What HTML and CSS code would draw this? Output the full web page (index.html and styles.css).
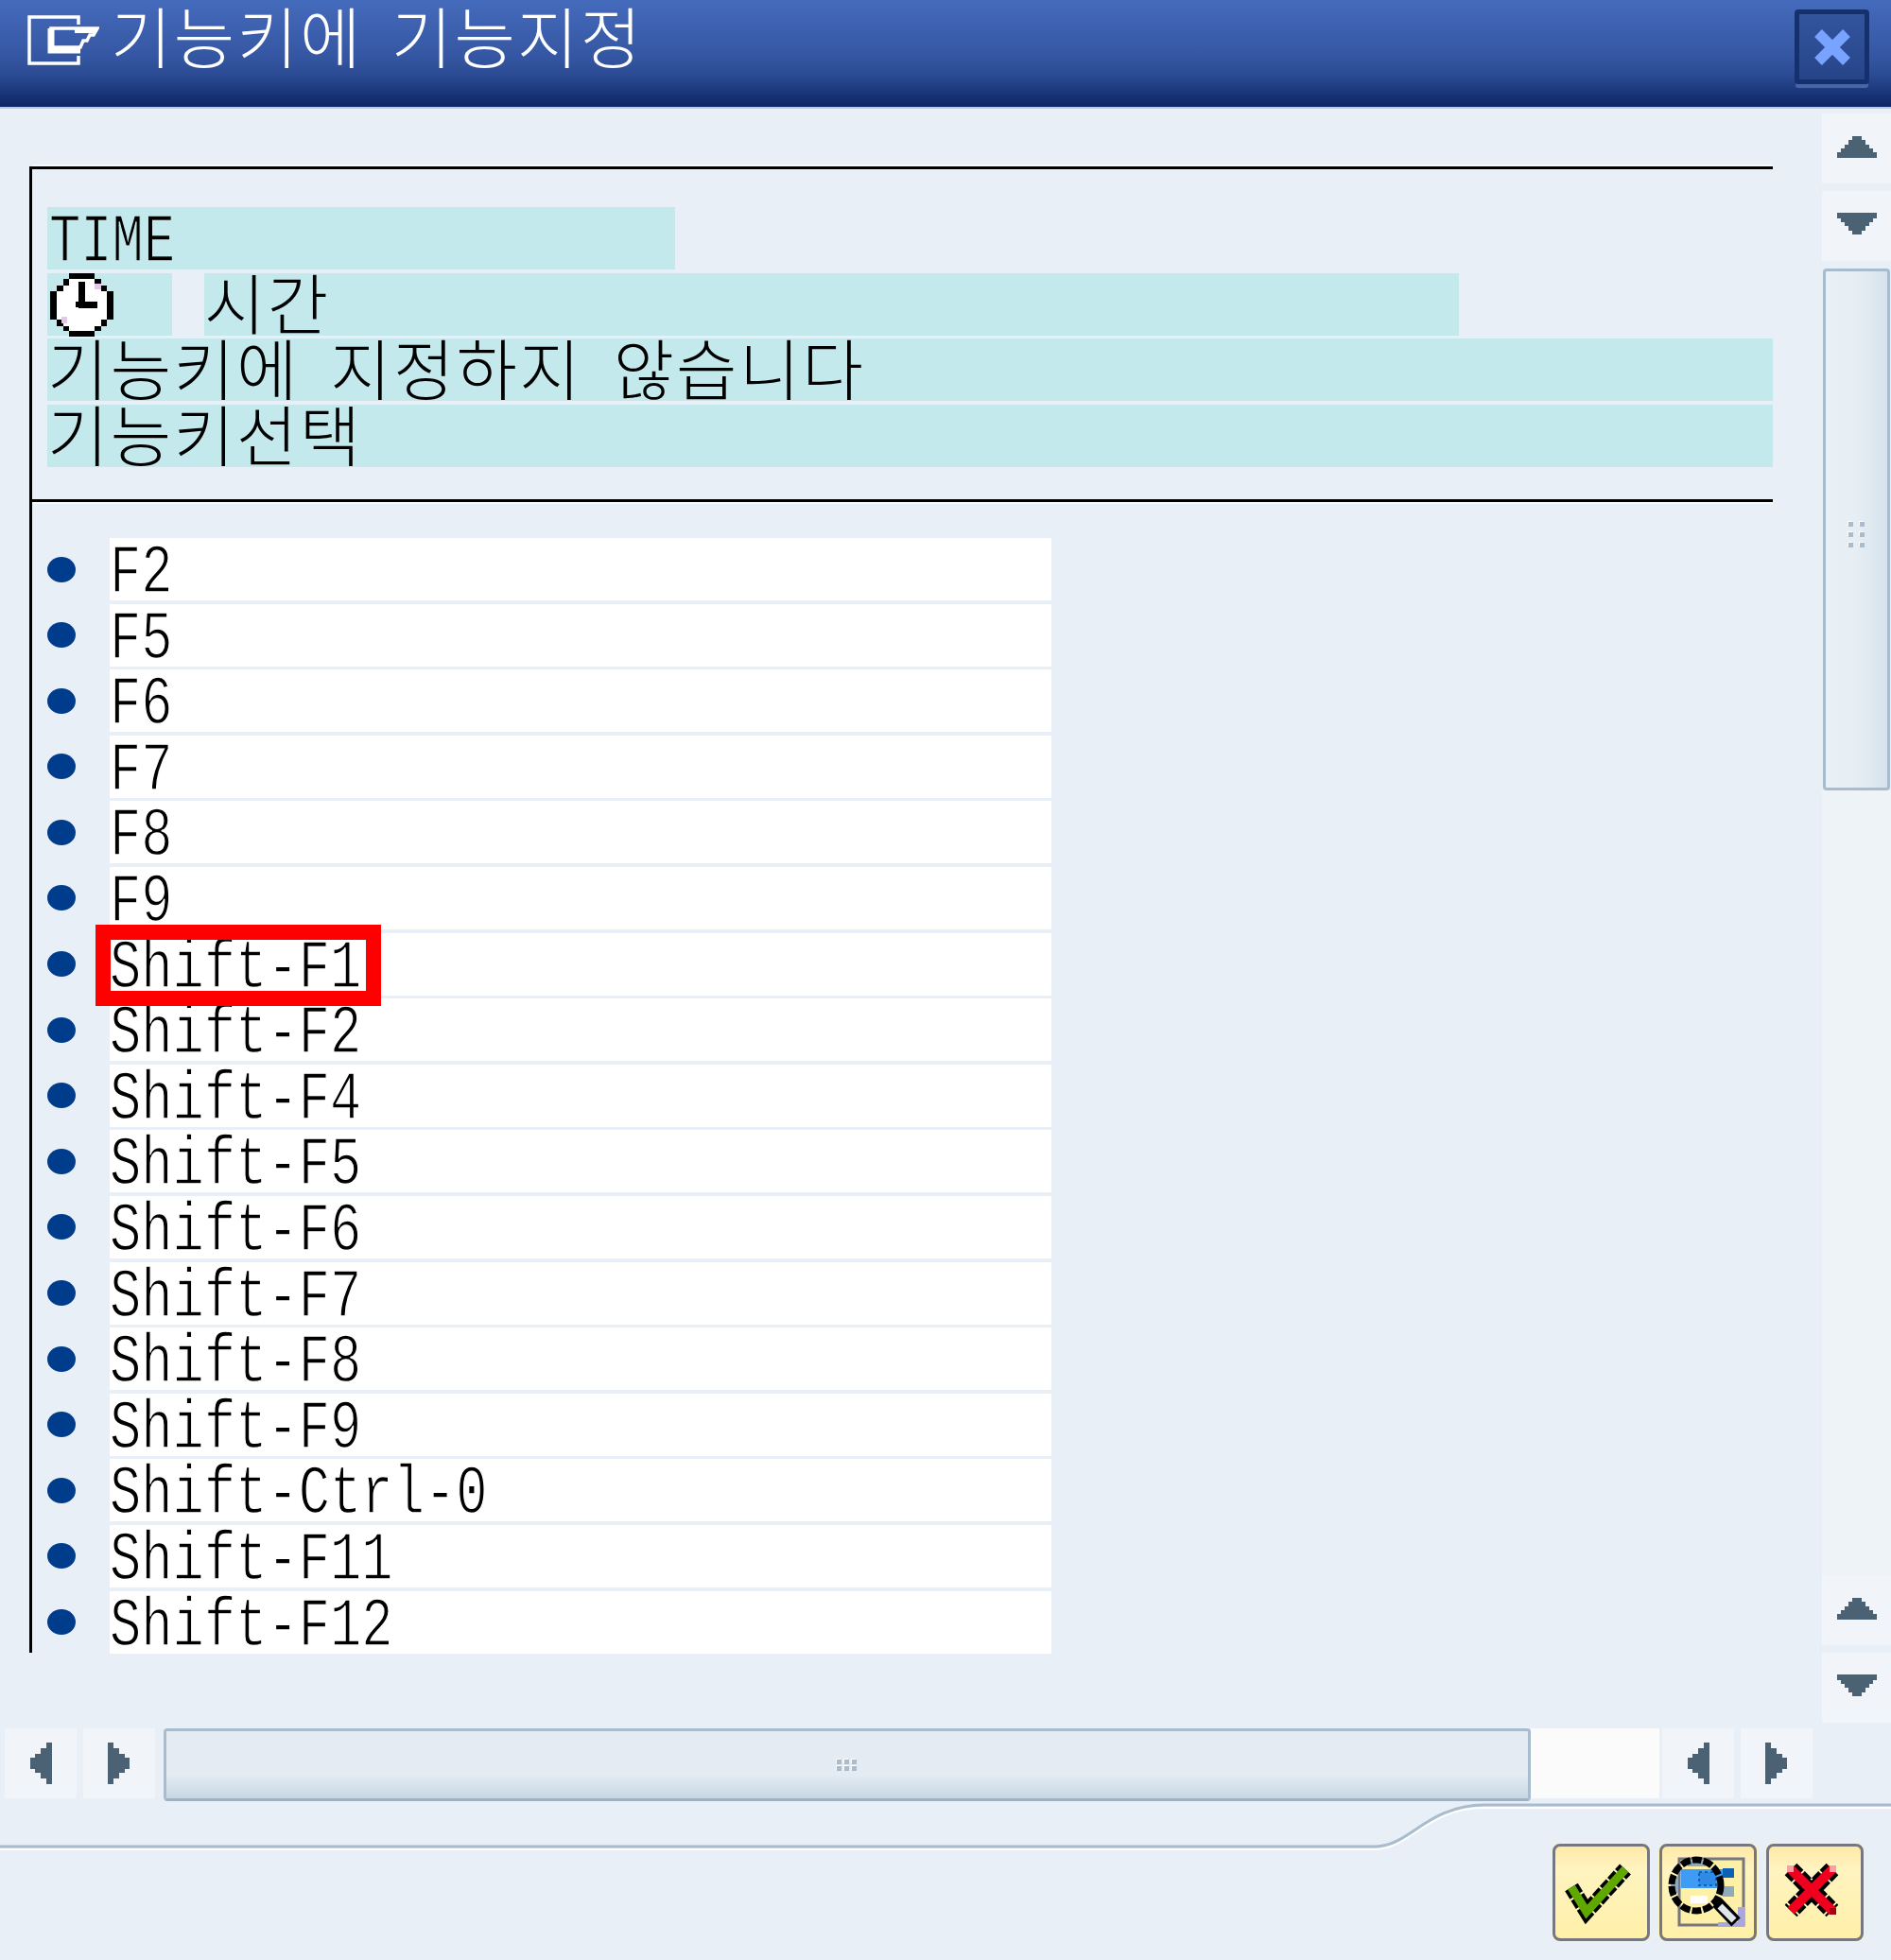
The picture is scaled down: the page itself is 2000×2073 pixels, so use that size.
FILE: index.html
```html
<!DOCTYPE html>
<html lang="ko">
<head>
    <meta charset="UTF-8">
    <title>기능키에 기능지정</title>
    <link rel="stylesheet" href="styles.css">
</head>
<body>
    <svg class="defs" width="0" height="0">
        <symbol id="arrow-up" viewBox="0 0 42 26">
            <polygon fill="#4a6274" points="0,26 0,20 4,20 4,16 8,16 8,12 12,12 12,7 16,7 16,3 26,3 26,7 30,7 30,12 34,12 34,16 38,16 38,20 42,20 42,26"/>
        </symbol>
        <symbol id="arrow-left" viewBox="0 0 24 44">
            <polygon fill="#4a6274" points="24,0 24,44 18,44 18,38 12,38 12,32 6,32 6,28 1,28 1,16 6,16 6,12 12,12 12,6 18,6 18,0"/>
        </symbol>
    </svg>

    <div class="dialog">
        <!-- Title Bar -->
        <div class="titlebar">
            <svg class="title-icon" width="76" height="54" viewBox="0 0 76 54">
                <path d="M54 10V2H2V51H54V43" fill="none" stroke="#fff" stroke-width="3.5"/>
                <path d="M25 14H74L70 21H66L63 27H59L56 34H25Z" fill="none" stroke="#fff" stroke-width="3.5"/>
                <path d="M25 14V37H56" fill="none" stroke="#fff" stroke-width="7"/>
                <path d="M50 14H74L70 19H50Z" fill="#fff"/>
            </svg>
            <span class="title-text hangul">기능키에 기능지정</span>
            <button class="close-btn">
                <svg width="44" height="44" viewBox="0 0 44 44">
                    <path d="M7 7L37 37M37 7L7 37" stroke="#78a4ff" stroke-width="11"/>
                </svg>
            </button>
        </div>

        <div class="main">
            <div class="content">
                <div class="frame">
                    <!-- Header -->
                    <div class="frame-head">
                        <div class="head-row">
                            <div class="cell cell-time"><span class="latin">TIME</span></div>
                        </div>
                        <div class="head-row">
                            <div class="cell cell-icon">
                                <svg class="clock" width="71" height="68" viewBox="5 9 71 68">
                                    <polygon fill="#000" points="28,8 55,8 55,15 62,15 62,22 68,22 68,28 75,28 75,58 68,58 68,65 62,65 62,70 55,70 55,76 28,76 28,70 22,70 22,65 15,65 15,58 8,58 8,28 15,28 15,22 22,22 22,15 28,15"/>
                                    <polygon fill="#fff" points="28,15 55,15 55,22 62,22 62,28 68,28 68,58 62,58 62,65 55,65 55,70 28,70 28,65 22,65 22,58 15,58 15,28 22,28 22,22 28,22"/>
                                    <path d="M55 20h7v6h-7zM20 55h6v7h-6z" fill="#e6c6ea"/>
                                    <path d="M38 18h7v21h13v7H38v-1h-3v-6h3z" fill="#000"/>
                                </svg>
                            </div>
                            <div class="cell cell-name"><span class="hangul">시간</span></div>
                        </div>
                        <div class="head-row">
                            <div class="cell cell-full"><span class="hangul">기능키에 지정하지 않습니다</span></div>
                        </div>
                        <div class="head-row">
                            <div class="cell cell-full"><span class="hangul">기능키선택</span></div>
                        </div>
                    </div>

                    <!-- Function Key List -->
                    <div class="key-list">
                        <div class="key-row"><i class="bullet"></i><div class="key"><span class="latin">F2</span></div></div>
                        <div class="key-row"><i class="bullet"></i><div class="key"><span class="latin">F5</span></div></div>
                        <div class="key-row"><i class="bullet"></i><div class="key"><span class="latin">F6</span></div></div>
                        <div class="key-row"><i class="bullet"></i><div class="key"><span class="latin">F7</span></div></div>
                        <div class="key-row"><i class="bullet"></i><div class="key"><span class="latin">F8</span></div></div>
                        <div class="key-row"><i class="bullet"></i><div class="key"><span class="latin">F9</span></div></div>
                        <div class="key-row"><i class="bullet"></i><div class="key"><span class="latin">Shift-F1</span><b class="marker"></b></div></div>
                        <div class="key-row"><i class="bullet"></i><div class="key"><span class="latin">Shift-F2</span></div></div>
                        <div class="key-row"><i class="bullet"></i><div class="key"><span class="latin">Shift-F4</span></div></div>
                        <div class="key-row"><i class="bullet"></i><div class="key"><span class="latin">Shift-F5</span></div></div>
                        <div class="key-row"><i class="bullet"></i><div class="key"><span class="latin">Shift-F6</span></div></div>
                        <div class="key-row"><i class="bullet"></i><div class="key"><span class="latin">Shift-F7</span></div></div>
                        <div class="key-row"><i class="bullet"></i><div class="key"><span class="latin">Shift-F8</span></div></div>
                        <div class="key-row"><i class="bullet"></i><div class="key"><span class="latin">Shift-F9</span></div></div>
                        <div class="key-row"><i class="bullet"></i><div class="key"><span class="latin">Shift-Ctrl-0</span></div></div>
                        <div class="key-row"><i class="bullet"></i><div class="key"><span class="latin">Shift-F11</span></div></div>
                        <div class="key-row"><i class="bullet"></i><div class="key"><span class="latin">Shift-F12</span></div></div>
                    </div>
                </div>
            </div>

            <!-- Vertical Scrollbar -->
            <div class="vscroll">
                <div class="scroll-btn"><svg width="42" height="26"><use href="#arrow-up"/></svg></div>
                <div class="scroll-btn down"><svg class="flip-y" width="42" height="26"><use href="#arrow-up"/></svg></div>
                <div class="vthumb">
                    <div class="grip"><i></i><i></i><i></i><i></i><i></i><i></i></div>
                </div>
                <div class="vtrack"></div>
                <div class="scroll-btn"><svg width="42" height="26"><use href="#arrow-up"/></svg></div>
                <div class="scroll-btn down"><svg class="flip-y" width="42" height="26"><use href="#arrow-up"/></svg></div>
            </div>
        </div>

        <!-- Horizontal Scrollbar -->
        <div class="hscroll">
            <div class="hbtn"><svg width="24" height="44"><use href="#arrow-left"/></svg></div>
            <div class="hbtn"><svg class="flip-x" width="24" height="44"><use href="#arrow-left"/></svg></div>
            <div class="hthumb">
                <div class="grip grip-h"><i></i><i></i><i></i><i></i><i></i><i></i></div>
            </div>
            <div class="htrack"></div>
            <div class="hbtn"><svg width="24" height="44"><use href="#arrow-left"/></svg></div>
            <div class="hbtn"><svg class="flip-x" width="24" height="44"><use href="#arrow-left"/></svg></div>
        </div>

        <!-- Footer -->
        <svg class="divider" width="2000" height="52" viewBox="0 0 2000 52">
            <path d="M0 50H1455C1490 50 1510 6 1570 6H2000" fill="none" stroke="#fff" stroke-width="2"/>
            <path d="M0 47H1455C1490 47 1510 3 1570 3H2000" fill="none" stroke="#a9bccd" stroke-width="3"/>
        </svg>
        <div class="actions">
            <button class="action-btn">
                <svg width="97" height="97" viewBox="0 0 97 97">
                    <polyline points="17,43 33,69 74,24" fill="none" stroke="#000" stroke-width="16" stroke-dasharray="10 2"/>
                    <polyline points="17,43 33,69 74,24" fill="none" stroke="#5fa800" stroke-width="9"/>
                </svg>
            </button>
            <button class="action-btn">
                <svg width="97" height="97" viewBox="8 8 97 97">
                    <rect x="26" y="21" width="68" height="70" fill="#fff0a8" stroke="#77777f" stroke-width="3"/>
                    <path d="M88 72h7v21H67v-5h21z" fill="#a9a6e0"/>
                    <rect x="28" y="32" width="44" height="20" fill="#3f9cf5"/>
                    <rect x="72" y="31" width="12" height="10" fill="#0a62b5"/>
                    <rect x="72" y="50" width="12" height="11" fill="#8fa9bd"/>
                    <path d="M47 35h18v14H47z" fill="#2f8ae6" stroke="#0a62b5" stroke-width="2" stroke-dasharray="3 3"/>
                    <rect x="38" y="60" width="18" height="8" fill="#fff"/>
                    <rect x="35" y="23" width="20" height="6" fill="#8fa9bd"/>
                    <rect x="17" y="40" width="8" height="17" fill="#8fa9bd"/>
                    <ellipse cx="44" cy="49" rx="26" ry="27" fill="none" stroke="#000" stroke-width="7" stroke-dasharray="10 2"/>
                    <line x1="66" y1="67" x2="86" y2="88" stroke="#000" stroke-width="13"/>
                    <line x1="69" y1="71" x2="84" y2="86" stroke="#dfe5ea" stroke-width="7"/>
                </svg>
            </button>
            <button class="action-btn">
                <svg width="97" height="97" viewBox="0 0 97 97">
                    <path d="M23 24L67 68M67 24L23 68" stroke="#000" stroke-width="18" stroke-dasharray="10 2"/>
                    <path d="M23 24L67 68M67 24L23 68" stroke="#f0001e" stroke-width="10"/>
                    <path d="M19 20h7v7h-7zM64 20h7v7h-7z" fill="#f7a0a8"/>
                    <path d="M64 65h7v7h-7z" fill="#a80010"/>
                </svg>
            </button>
        </div>
    </div>
</body>
</html>
```

FILE: styles.css
```css
* {
    box-sizing: border-box;
}
body {
    margin: 0;
    background-color: #e8eff6;
    font-family: "Liberation Mono", monospace;
    color: #000;
}
.defs {
    position: absolute;
}
.dialog {
    width: 2000px;
    height: 2073px;
    display: flex;
    flex-direction: column;
    overflow: hidden;
}
.latin {
    display: inline-block;
    font-family: "Liberation Mono", monospace;
    font-size: 73px;
    line-height: 76px;
    transform: scaleX(0.76);
    transform-origin: left center;
    white-space: pre;
}
.hangul {
    font-family: "Noto Sans CJK KR", sans-serif;
    font-size: 70px;
    font-weight: 300;
    line-height: 60px;
    letter-spacing: 2.3px;
    word-spacing: 10.5px;
    white-space: pre;
    -webkit-text-stroke: 0;
}

/* title bar */
.titlebar {
    height: 115px;
    flex: none;
    display: flex;
    align-items: flex-start;
    padding: 16px 23px 0 29px;
    background: linear-gradient(#456bbc 0, #3556a2 60px, #2a4a92 80px, #0f2768 111px);
    border-bottom: 2px solid #b9c8dc;
}
.title-icon {
    flex: none;
}
.title-text {
    color: #fff;
    margin: -9px 0 0 12px;
    word-spacing: 8px;
}
.close-btn {
    margin: -6px 0 0 auto;
    width: 79px;
    height: 79px;
    padding: 0;
    display: flex;
    align-items: center;
    justify-content: center;
    background: linear-gradient(#33559f, #264488);
    border: 5px solid #14306e;
    border-radius: 4px;
    box-shadow: 0 5px 0 -1px #4766a8;
}

/* frame and header */
.main {
    height: 1713px;
    flex: none;
    display: flex;
}
.content {
    flex: 1;
    padding: 61px 47px 0 31px;
}
.frame {
    height: 1572px;
    border-left: 3px solid #000;
}
.frame-head {
    height: 355px;
    border-top: 3px solid #000;
    border-bottom: 3px solid #000;
    padding: 40px 0 0 16px;
    display: grid;
    grid-auto-rows: 66px;
    row-gap: 3.5px;
    align-content: start;
    box-shadow: 0 -2px 0 #f7fafc, 0 2px 0 #f7fafc;
}
.head-row {
    display: flex;
}
.cell {
    background-color: #c4e9ec;
    -webkit-text-stroke: 1.5px #c4e9ec;
}
.cell-time {
    width: 664px;
    padding-left: 2px;
}
.cell-icon {
    width: 132px;
    margin-right: 34px;
}
.clock {
    display: block;
}
.cell-name {
    width: 1327px;
}
.cell-full {
    flex: 1;
}

/* function keys */
.key-list {
    margin-top: 38px;
    padding-left: 16px;
    display: grid;
    grid-auto-rows: 66px;
    row-gap: 3.6px;
}
.key-row {
    display: flex;
    align-items: center;
}
.bullet {
    width: 30px;
    height: 27px;
    margin-right: 36px;
    border-radius: 50%;
    background-color: #003c8c;
}
.key {
    position: relative;
    width: 996px;
    height: 66px;
    background-color: #fff;
    -webkit-text-stroke: 1.5px #fff;
}
.marker {
    position: absolute;
    z-index: 1;
    left: -15px;
    top: -9px;
    width: 302px;
    height: 86px;
    border: 16px solid #f00;
}

/* scrollbars */
.vscroll {
    width: 78px;
    flex: none;
    display: flex;
    flex-direction: column;
    padding: 5px 0 6px;
    gap: 8px;
}
.scroll-btn {
    height: 74px;
    margin-left: 5px;
    padding-bottom: 6px;
    flex: none;
    display: flex;
    align-items: center;
    justify-content: center;
    background-color: #f1f5f9;
}
.scroll-btn.down {
    padding-bottom: 2px;
}
.flip-y {
    transform: scaleY(-1);
}
.flip-x {
    transform: scaleX(-1);
}
.vthumb {
    height: 552px;
    flex: none;
    margin: 0 1px 0 6px;
    padding-top: 10px;
    display: flex;
    align-items: center;
    justify-content: center;
    border: 3px solid #a9bccd;
    border-radius: 4px;
    background: linear-gradient(90deg, #e9f0f6, #e6eef4 50%, #d5e3ec);
}
.vtrack {
    flex: 1;
    margin: -8px 0 -8px 5px;
    background-color: #eef3f8;
}
.grip {
    display: grid;
    grid-template-columns: 6px 6px;
    gap: 6px 6px;
}
.grip i {
    width: 5px;
    height: 5px;
    background-color: #a9bccd;
    box-shadow: -1px -1px 0 #fff;
}
.grip-h {
    grid-template-columns: 6px 6px 6px;
    gap: 2px 2px;
}
.hscroll {
    height: 77px;
    flex: none;
    display: flex;
    padding-left: 5px;
    padding-right: 83px;
    gap: 7px;
}
.hbtn {
    width: 76px;
    height: 74px;
    flex: none;
    display: flex;
    align-items: center;
    justify-content: center;
    background-color: #f1f5f9;
}
.hthumb {
    width: 1446px;
    height: 77px;
    margin-left: 2px;
    flex: none;
    display: flex;
    align-items: center;
    justify-content: center;
    border: 3px solid #a9bccd;
    border-bottom-color: #9fb2c3;
    border-radius: 4px;
    background: linear-gradient(#e4ebf3, #e4ebf3 65%, #c8d7e3);
}
.htrack {
    flex: 1;
    margin: 0 -4px 3px -7px;
    background-color: #fbfbfb;
}

/* footer */
.divider {
    flex: none;
    display: block;
    margin-top: 1px;
    margin-bottom: -8px;
}
.actions {
    display: flex;
    justify-content: flex-end;
    gap: 10px;
    padding-right: 29px;
}
.action-btn {
    width: 103px;
    height: 103px;
    padding: 0;
    display: flex;
    align-items: center;
    justify-content: center;
    background: linear-gradient(#ffe9a8, #fff4c0 25%, #fff0a8);
    border: 3px solid #77777f;
    border-radius: 8px;
    box-shadow: 0 0 0 1px #fff3b8;
}
```
